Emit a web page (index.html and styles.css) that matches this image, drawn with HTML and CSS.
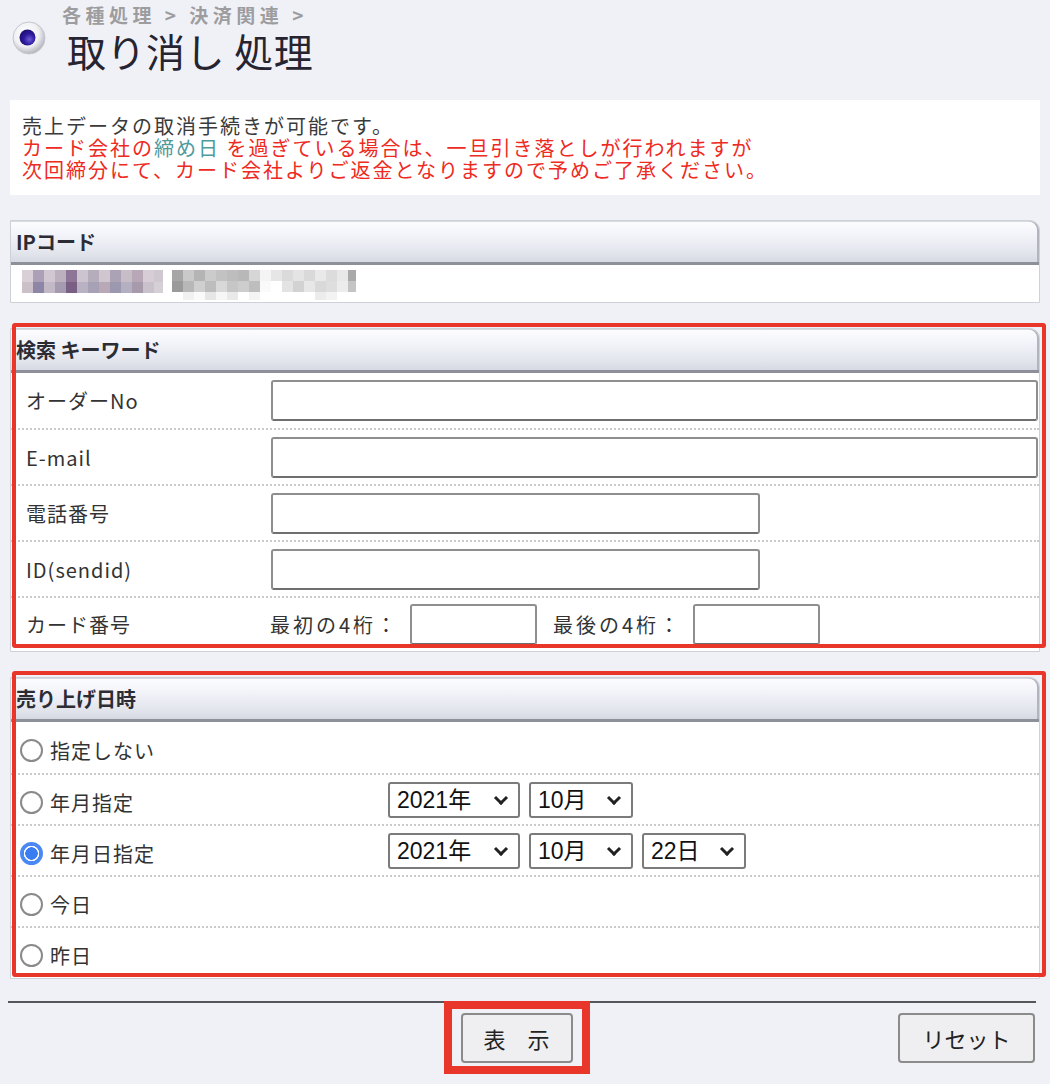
FILE: index.html
```html
<!DOCTYPE html>
<html lang="ja">
<head>
<meta charset="utf-8">
<title>取り消し処理</title>
<link rel="stylesheet" href="styles.css">
</head>
<body>
<div class="page">
  <header class="page-head">
    <svg class="head-icon" width="34" height="34" viewBox="0 0 34 34" aria-hidden="true">
      <defs>
        <radialGradient id="ball" cx="42%" cy="38%" r="62%">
          <stop offset="0" stop-color="#ffffff"/>
          <stop offset="0.62" stop-color="#f1f1f4"/>
          <stop offset="1" stop-color="#b4b5be"/>
        </radialGradient>
        <radialGradient id="dot" cx="62%" cy="62%" r="70%">
          <stop offset="0" stop-color="#6a5ad8"/>
          <stop offset="0.5" stop-color="#2c1a9a"/>
          <stop offset="1" stop-color="#1a0c6e"/>
        </radialGradient>
      </defs>
      <circle cx="17" cy="17" r="16" fill="url(#ball)" stroke="#c6c7ce" stroke-width="1"/>
      <circle cx="15.5" cy="16.5" r="8" fill="url(#dot)"/>
    </svg>
    <div class="head-text">
      <div class="crumb">各種処理 &gt; 決済関連 &gt;</div>
      <h1 class="title">取り消し 処理</h1>
    </div>
  </header>

  <section class="notice">
    <p class="notice-line">売上データの取消手続きが可能です。</p>
    <p class="notice-line warn">カード会社の<span class="teal">締め日</span> を過ぎている場合は、一旦引き落としが行われますが</p>
    <p class="notice-line warn">次回締分にて、カード会社よりご返金となりますので予めご了承ください。</p>
  </section>

  <section class="panel panel-ip">
    <div class="panel-head">IPコード</div>
    <div class="ip-body">
      <span class="mosaic mosaic-a"></span>
      <span class="mosaic mosaic-b"></span>
    </div>
  </section>

  <section class="panel marked mark-search">
    <div class="panel-head">検索 キーワード</div>
    <div class="frow first">
      <label class="flabel" for="order">オーダーNo</label>
      <input class="tbox wide" id="order" type="text">
    </div>
    <div class="frow">
      <label class="flabel" for="mail">E-mail</label>
      <input class="tbox wide" id="mail" type="text">
    </div>
    <div class="frow">
      <label class="flabel" for="tel">電話番号</label>
      <input class="tbox half" id="tel" type="text">
    </div>
    <div class="frow">
      <label class="flabel" for="sid">ID(sendid)</label>
      <input class="tbox half" id="sid" type="text">
    </div>
    <div class="frow card">
      <span class="flabel">カード番号</span>
      <div class="card-fields">
        <span class="clabel">最初の4桁：</span>
        <input class="tbox short" type="text">
        <span class="clabel second">最後の4桁：</span>
        <input class="tbox short" type="text">
      </div>
    </div>
  </section>

  <section class="panel marked mark-date">
    <div class="panel-head">売り上げ日時</div>
    <div class="drow first">
      <label class="rlabel"><input type="radio" name="d">指定しない</label>
    </div>
    <div class="drow">
      <label class="rlabel"><input type="radio" name="d">年月指定</label>
      <div class="sels">
        <span class="sel y"><select><option>2021年</option></select></span>
        <span class="sel m"><select><option>10月</option></select></span>
      </div>
    </div>
    <div class="drow">
      <label class="rlabel"><input type="radio" name="d" checked>年月日指定</label>
      <div class="sels">
        <span class="sel y"><select><option>2021年</option></select></span>
        <span class="sel m"><select><option>10月</option></select></span>
        <span class="sel m"><select><option>22日</option></select></span>
      </div>
    </div>
    <div class="drow">
      <label class="rlabel"><input type="radio" name="d">今日</label>
    </div>
    <div class="drow last">
      <label class="rlabel"><input type="radio" name="d">昨日</label>
    </div>
  </section>

  <footer class="actions">
    <div class="act-center">
      <div class="btn-mark"><button class="btn show" type="button">表　示</button></div>
    </div>
    <div class="act-right">
      <button class="btn reset" type="button">リセット</button>
    </div>
  </footer>
</div>
</body>
</html>
```

FILE: styles.css
```css
* { box-sizing: border-box; }

html, body { margin: 0; padding: 0; }

body {
  background: #f0f1f7;
  font-family: "Noto Sans CJK JP", "Noto Sans", sans-serif;
  color: #333;
}

.page {
  width: 1050px;
  padding: 0 10px;
}

/* header */
.page-head {
  display: flex;
  align-items: flex-start;
  height: 100px;
}

.head-icon {
  margin: 21px 0 0 2px;
  flex: none;
}

.head-text {
  margin-left: 16px;
}

.crumb {
  margin-top: 2px;
  font-size: 19px;
  line-height: 26px;
  font-weight: bold;
  color: #9d9d9f;
  letter-spacing: 4.5px;
}

.title {
  margin: 0;
  padding-left: 5px;
  font-size: 39px;
  line-height: 44px;
  font-weight: 400;
  color: #262430;
  letter-spacing: 0.5px;
}

/* notice */
.notice {
  background: #fff;
  padding: 15px 12px 14px;
  width: 1030px;
}

.notice-line {
  margin: 0;
  font-size: 20px;
  line-height: 22px;
  letter-spacing: 2px;
  color: #3a3a3a;
  white-space: nowrap;
}

.notice-line.warn { color: #ee2a22; }
.notice-line .teal { color: #4f9b9d; }

/* panels */
.panel {
  position: relative;
  width: 1030px;
  margin-top: 25px;
  background: #fff;
  border: 1px solid #cfd1d8;
  border-top-right-radius: 10px;
}

.panel-head {
  height: 44px;
  display: flex;
  align-items: center;
  padding-left: 5px;
  font-size: 20px;
  font-weight: bold;
  color: #2c2c34;
  background: linear-gradient(#fdfdff 0%, #f1f2f8 40%, #e2e4ec 80%, #d6d9e3 100%);
  border-bottom: 3px solid #8d8f99;
  border-top-right-radius: 9px;
  box-shadow: inset -2px 0 0 #b3b5be, inset 0 1px 0 #d9dbe2;
}

/* IP mosaic */
.ip-body {
  height: 37px;
  display: flex;
  align-items: flex-start;
  gap: 9px;
  padding: 5px 0 0 11px;
}

.mosaic { display: block; }

.mosaic-a {
  width: 141px;
  height: 23px;
  background-image:
    linear-gradient(90deg, #d8d0d6 0 11px, #aca0b9 11px 22px, #d1c7d2 22px 33px, #bcb0bf 33px 44px, #8c7597 44px 55px, #ccc4ce 55px 66px, #b5adbb 66px 77px, #cfc6cf 77px 88px, #aba3b5 88px 99px, #c7bdc6 99px 110px, #b7a7b7 110px 121px, #d6cdd7 121px 132px, #cfc8d0 132px 141px),
    linear-gradient(90deg, #cbbfc8 0 11px, #8e86a6 11px 22px, #c2b8c6 22px 33px, #a49bb0 33px 44px, #7a5f84 44px 55px, #b8b2c2 55px 66px, #a6a1b5 66px 77px, #b9a8b6 77px 88px, #9c98b0 88px 99px, #b4b0c2 99px 110px, #a69aab 110px 121px, #c9c1cc 121px 132px, #d5cfd6 132px 141px);
  background-size: 100% 12px, 100% 11px;
  background-position: top left, bottom left;
  background-repeat: no-repeat;
}

.mosaic-b {
  width: 191px;
  height: 30px;
  background-image:
    linear-gradient(90deg, #a6a6a6 0 11px, #c9c9c9 11px 22px, #b4b4b4 22px 33px, #cbcbcb 33px 44px, #c2c2c2 44px 55px, #bdbdbd 55px 66px, #b8b8b8 66px 77px, #d6d6d6 77px 88px, #f4f4f4 88px 99px, #e6e6e6 99px 110px, #dadada 110px 121px, #e4e4e4 121px 132px, #d9d9d9 132px 143px, #e9e9e9 143px 154px, #dcdcdc 154px 165px, #e8e8e8 165px 176px, #a9a9a9 176px 184px, #ffffff 184px 191px),
    linear-gradient(90deg, #9a9a9a 0 11px, #b8b8b8 11px 22px, #cfcfcf 22px 33px, #bdbdbd 33px 44px, #d8d8d8 44px 55px, #c6c6c6 55px 66px, #cdcdcd 66px 77px, #bebebe 77px 88px, #fafafa 88px 99px, #ffffff 99px 110px, #e3e3e3 110px 121px, #d2d2d2 121px 132px, #e7e7e7 132px 143px, #d9d9d9 143px 154px, #dedede 154px 165px, #ececec 165px 176px, #c4c4c4 176px 184px, #ffffff 184px 191px),
    linear-gradient(90deg, #ffffff 0 11px, #f1f1f1 11px 22px, #fafafa 22px 33px, #e6e6e6 33px 44px, #f6f6f6 44px 55px, #e9e9e9 55px 66px, #ffffff 66px 77px, #f4f4f4 77px 88px, #ffffff 88px 143px, #ececec 143px 154px, #f3f3f3 154px 165px, #ffffff 165px 191px);
  background-size: 100% 11px, 100% 11px, 100% 8px;
  background-position: 0 0, 0 11px, 0 22px;
  background-repeat: no-repeat;
}

/* red annotation frames (overlay) */
.marked::after {
  content: "";
  position: absolute;
  border: 4px solid #e8362a;
  border-radius: 3px;
  pointer-events: none;
}

.mark-search::after {
  top: -6px;
  left: 1px;
  right: -7px;
  bottom: 3px;
}

.mark-date::after {
  top: -7px;
  left: 1px;
  right: -7px;
  bottom: 1px;
}

/* search rows */
.frow {
  display: grid;
  grid-template-columns: 260px 1fr;
  align-items: center;
  height: 56px;
  border-top: 2px dotted #cacaca;
}

.frow.first {
  border-top: none;
  height: 55px;
}

.frow.card { height: 55px; }

.flabel {
  padding-left: 15px;
  font-size: 20px;
  letter-spacing: 1px;
  color: #333;
  white-space: nowrap;
}

.tbox {
  height: 41px;
  border: 2px solid #8e8e8e;
  border-bottom-color: #6f6f6f;
  border-radius: 3px;
  background: #fff;
  font: inherit;
  padding: 0 6px;
}

.tbox.wide { width: 767px; }
.tbox.half { width: 489px; }
.tbox.short { width: 127px; }

.card-fields {
  display: flex;
  align-items: center;
}

.clabel {
  width: 140px;
  font-size: 20px;
  letter-spacing: 3px;
  color: #333;
  margin-left: -1px;
  white-space: nowrap;
}

.clabel.second { margin-left: 16px; }

/* date rows */
.drow {
  display: grid;
  grid-template-columns: 377px 1fr;
  align-items: center;
  height: 51px;
  border-top: 2px dotted #cacaca;
}

.drow.first {
  border-top: none;
  height: 51px;
}

.drow.last { height: 52px; }

.rlabel {
  display: flex;
  align-items: center;
  padding: 5px 0 0 9px;
  font-size: 20px;
  letter-spacing: 1px;
  color: #333;
}

.rlabel input {
  appearance: none;
  -webkit-appearance: none;
  width: 23px;
  height: 23px;
  margin: 0 7px 0 0;
  border: 2px solid #8a8a8a;
  border-radius: 50%;
  background: #fff;
  flex: none;
}

.rlabel input:checked {
  border-color: #4a88f5;
  background: radial-gradient(circle, #3a7cf2 0 6px, #ffffff 6.5px 7.5px, #4a88f5 8px);
}

.sels {
  display: flex;
  gap: 9px;
}

.sel {
  position: relative;
  display: inline-block;
}

.sel select {
  appearance: none;
  -webkit-appearance: none;
  height: 36px;
  border: 2px solid #7b7b7b;
  border-radius: 3px;
  background: #fff;
  font-family: "Liberation Sans", "Noto Sans CJK JP", sans-serif;
  font-size: 23px;
  color: #111;
  padding: 0 0 0 7px;
}

.sel.y select { width: 132px; }
.sel.m select { width: 104px; }

.sel::after {
  content: "";
  position: absolute;
  right: 14px;
  top: 11px;
  width: 7px;
  height: 7px;
  border-right: 3px solid #222;
  border-bottom: 3px solid #222;
  transform: rotate(45deg);
  pointer-events: none;
}

/* footer actions */
.actions {
  display: grid;
  grid-template-columns: 1fr auto 1fr;
  align-items: start;
  width: 1028px;
  margin: 22px 0 0 -2px;
  padding-top: 10px;
  border-top: 2px solid #55565c;
}

.act-center {
  grid-column: 2;
  margin-right: 11px;
}

.act-right {
  grid-column: 3;
  justify-self: end;
  margin-right: 1px;
}

/* red annotation frame around the show button */
.btn-mark {
  margin-top: -12px;
  width: 146px;
  padding: 4px 9px 3px 9px;
  border: 8px solid #e8362a;
}

.btn {
  display: block;
  height: 50px;
  border: 2px solid #8b8b8b;
  border-radius: 4px;
  background: #efeff1;
  font-family: "Noto Sans CJK JP", sans-serif;
  font-size: 22px;
  line-height: 1;
  color: #222;
  padding: 0;
}

.btn.show { width: 112px; }
.btn.reset { width: 137px; }
```
